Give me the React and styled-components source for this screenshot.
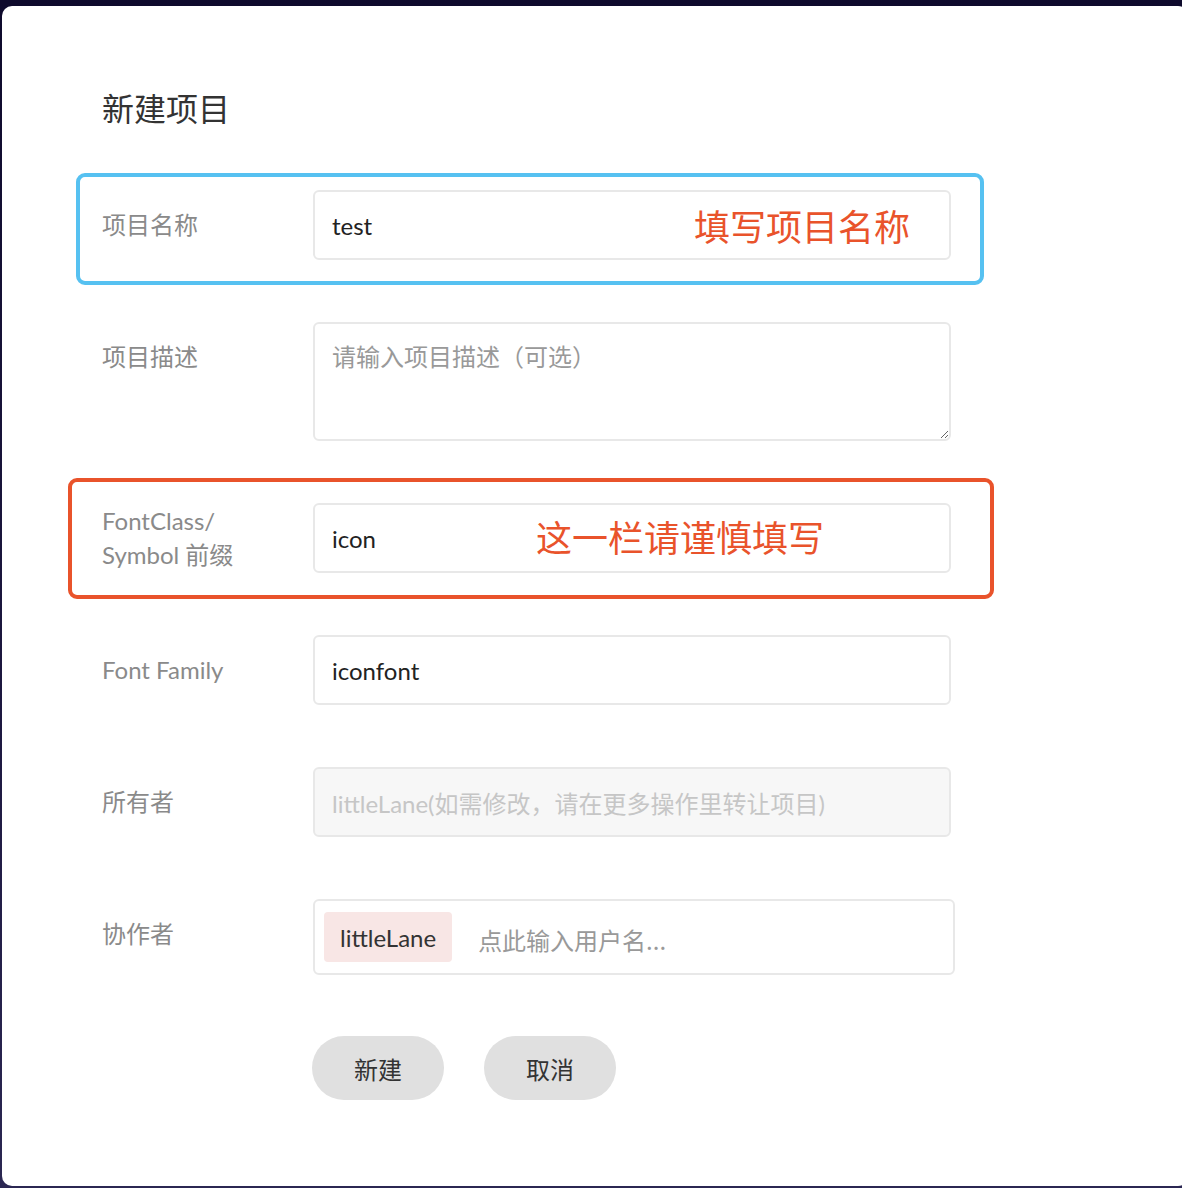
import React from 'react';
import styled, { createGlobalStyle } from 'styled-components';

const GlobalStyle = createGlobalStyle`
  html, body {
    margin: 0;
    padding: 0;
  }
  body {
    width: 1182px;
    height: 1188px;
    overflow: hidden;
    background: linear-gradient(180deg, #0e0a2c 0%, #1d1840 60%, #2b2752 100%);
    font-family: "Lato", "Noto Sans CJK SC", sans-serif;
  }
`

const Card = styled.div`
  box-sizing: border-box;
  margin: 6px 0 0 2px;
  width: 1186px;
  height: 1180px;
  background: #fff;
  border-radius: 10px;
  padding: 83px 0 0 98px;
`

const Title = styled.h2`
  margin: 0 0 65px 0;
  padding-left: 2px;
  font-size: 32px;
  line-height: 36px;
  font-weight: 400;
  color: #333;
  font-family: "Noto Sans CJK SC", sans-serif;
`

const Form = styled.div`
  display: flex;
  flex-direction: column;
  gap: 62px;
`

const Row = styled.div`
  position: relative;
  display: grid;
  grid-template-columns: 213px ${p => p.$width || 638}px;
  align-items: start;
`

const Label = styled.div`
  min-height: 70px;
  display: flex;
  align-items: center;
  padding-left: 2px;
  font-size: 24px;
  line-height: 34px;
  color: #8a8a8a;
  font-family: "Lato", "Noto Sans CJK SC", sans-serif;
`

const Input = styled.input`
  box-sizing: border-box;
  width: 100%;
  height: 70px;
  border: 2px solid #e8e8e8;
  border-radius: 6px;
  padding: 0 17px;
  font-size: 24px;
  font-family: "Lato", "Noto Sans CJK SC", sans-serif;
  color: #222;
  background: #fff;
  outline: none;

  &::placeholder {
    color: #999;
  }

  &:disabled {
    background: #f7f7f7;
    color: #c6c6c6;
  }
`

const TextArea = styled.textarea`
  box-sizing: border-box;
  width: 100%;
  height: 119px;
  border: 2px solid #e8e8e8;
  border-radius: 6px;
  padding: 14px 17px;
  font-size: 24px;
  line-height: 36px;
  font-family: "Noto Sans CJK SC", sans-serif;
  color: #222;
  outline: none;
  display: block;

  &::placeholder {
    color: #999;
  }
`

const Mark = styled.div`
  position: absolute;
  box-sizing: border-box;
  pointer-events: none;
  top: ${p => p.$top}px;
  left: ${p => p.$left}px;
  width: ${p => p.$w}px;
  height: ${p => p.$h}px;
  border: 4px solid ${p => p.$color};
  border-radius: 9px;
`

const Note = styled.span`
  position: absolute;
  top: ${p => p.$top}px;
  left: ${p => p.$left}px;
  font-size: 36px;
  line-height: 50px;
  color: #e9532b;
  font-family: "Noto Sans CJK SC", sans-serif;
  pointer-events: none;
`

const TagBox = styled.div`
  box-sizing: border-box;
  height: 76px;
  border: 2px solid #e8e8e8;
  border-radius: 6px;
  display: flex;
  align-items: center;
  padding: 0 9px;
  gap: 26px;
`

const Tag = styled.span`
  height: 50px;
  padding: 0 16px;
  display: inline-flex;
  align-items: center;
  background: #f8e6e5;
  border-radius: 4px;
  font-size: 24px;
  color: #333;
`

const TagInput = styled.input`
  flex: 1;
  border: none;
  outline: none;
  font-size: 24px;
  font-family: "Noto Sans CJK SC", sans-serif;
  padding: 4px 0 0 0;

  &::placeholder {
    color: #999;
  }
`

const Actions = styled.div`
  display: flex;
  gap: 40px;
  margin-top: 61px;
  padding-left: 212px;
`

const Button = styled.button`
  width: 132px;
  height: 64px;
  border: none;
  border-radius: 32px;
  background: #e0e0e0;
  color: #333;
  font-size: 24px;
  font-family: "Noto Sans CJK SC", sans-serif;
  cursor: pointer;
`

export default function App() {
  return (
    <>
      <GlobalStyle />
      <Card>
        <Title>新建项目</Title>
        <Form>
          <Row>
            <Mark $color="#56c1f1" $top={-17} $left={-24} $w={908} $h={112} />
            <Label>项目名称</Label>
            <Input defaultValue="test" />
            <Note $top={10} $left={594}>填写项目名称</Note>
          </Row>
          <Row>
            <Label>项目描述</Label>
            <TextArea placeholder="请输入项目描述（可选）" />
          </Row>
          <Row>
            <Mark $color="#e9532b" $top={-25} $left={-32} $w={926} $h={121} />
            <Label>FontClass/<br />Symbol 前缀</Label>
            <Input defaultValue="icon" />
            <Note $top={8} $left={436}>这一栏请谨慎填写</Note>
          </Row>
          <Row>
            <Label>Font Family</Label>
            <Input defaultValue="iconfont" />
          </Row>
          <Row>
            <Label>所有者</Label>
            <Input disabled value="littleLane(如需修改，请在更多操作里转让项目)" readOnly />
          </Row>
          <Row $width={642}>
            <Label>协作者</Label>
            <TagBox>
              <Tag>littleLane</Tag>
              <TagInput placeholder="点此输入用户名..." />
            </TagBox>
          </Row>
        </Form>
        <Actions>
          <Button>新建</Button>
          <Button>取消</Button>
        </Actions>
      </Card>
    </>
  );
}
